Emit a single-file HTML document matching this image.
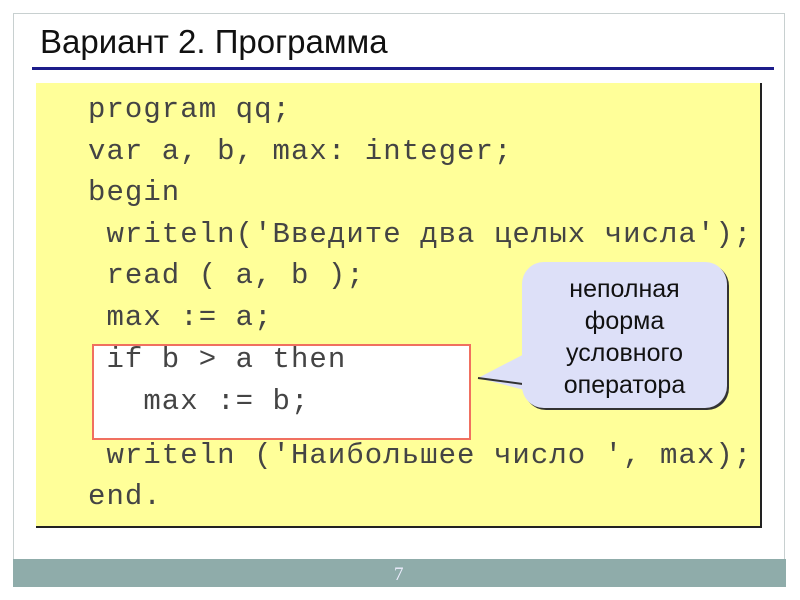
<!DOCTYPE html>
<html><head><meta charset="utf-8"><style>
body{margin:0;width:800px;height:600px;background:#fff;position:relative;overflow:hidden;font-family:"Liberation Sans",sans-serif}
.slide{position:absolute;left:13px;top:13px;width:772px;height:574px;border:1px solid #c8d0d0;box-sizing:border-box}
.title{position:absolute;left:40px;top:23px;font-size:33px;color:#111}
.line{position:absolute;left:32px;top:67px;width:742px;height:3px;background:#1c1c8a}
.yellow{position:absolute;left:36px;top:83px;width:724px;height:443px;background:#ffff99;border-right:2px solid #222;border-bottom:2px solid #222}
.red{position:absolute;left:92px;top:344px;width:379px;height:96px;background:#fff;border:2px solid #f07060;box-sizing:border-box}
.code{position:absolute;left:88px;font-family:"Liberation Mono",monospace;font-size:29px;letter-spacing:1.05px;color:#444;white-space:pre;line-height:1}
.bar{position:absolute;left:13px;top:559px;width:773px;height:28px;background:#8facaa}
.num{position:absolute;left:394px;top:564px;font-family:"Liberation Serif",serif;font-size:19px;color:#eef}
.callout{position:absolute;left:522px;top:262px;width:205px;height:146px;background:#dde0f8;border-radius:22px;box-shadow:2px 2px 0 #333;text-align:center;font-size:25px;line-height:32px;color:#111;padding-top:11px;box-sizing:border-box}
</style></head><body>
<div class="slide"></div>
<div class="title">Вариант 2. Программа</div>
<div class="line"></div>
<div class="yellow"></div>
<div class="red"></div>
<div class="code" style="top:95px">program qq;</div>
<div class="code" style="top:137px">var a, b, max: integer;</div>
<div class="code" style="top:178px">begin</div>
<div class="code" style="top:220px"> writeln('Введите два целых числа');</div>
<div class="code" style="top:261px"> read ( a, b );</div>
<div class="code" style="top:303px"> max := a;</div>
<div class="code" style="top:345px"> if b &gt; a then</div>
<div class="code" style="top:387px">   max := b;</div>
<div class="code" style="top:441px"> writeln ('Наибольшее число ', max);</div>
<div class="code" style="top:482px">end.</div>
<svg style="position:absolute;left:470px;top:330px" width="70" height="70"><polygon points="8,48 62,20 62,62" fill="#dde0f8"/><line x1="8" y1="48" x2="60" y2="55" stroke="#333" stroke-width="2"/></svg>
<div class="callout">неполная<br>форма<br>условного<br>оператора</div>
<div class="bar"></div>
<div class="num">7</div>
</body></html>
